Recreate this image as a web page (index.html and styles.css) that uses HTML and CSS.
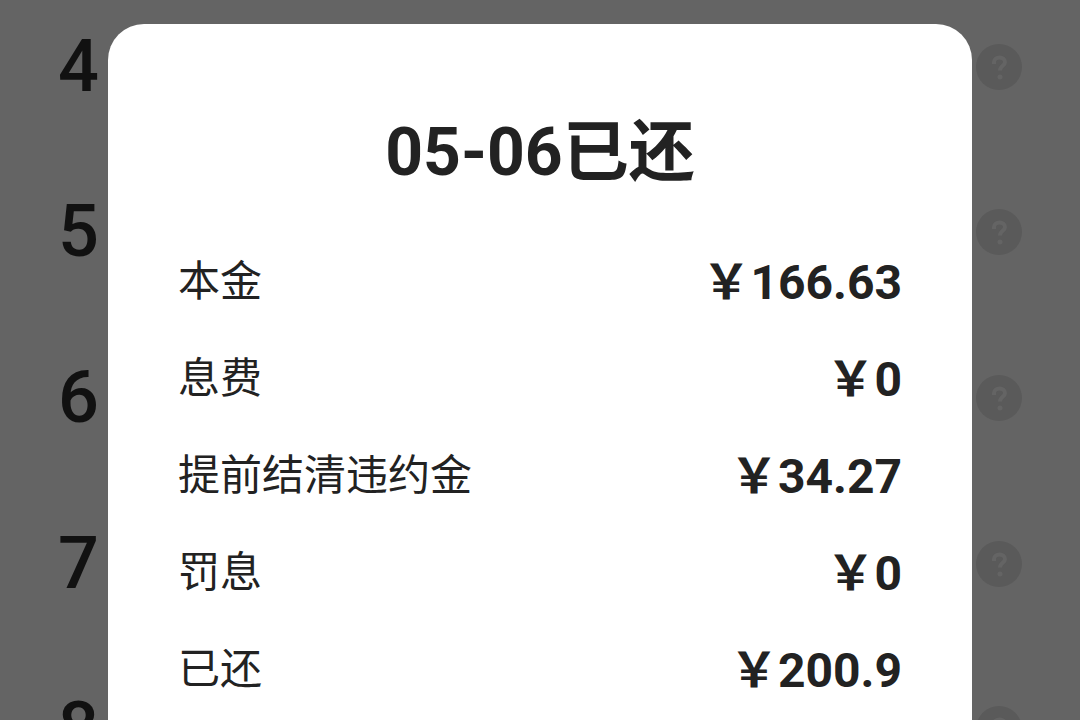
FILE: index.html
```html
<!DOCTYPE html>
<html lang="zh-CN">
<head>
  <meta charset="UTF-8">
  <meta name="viewport" content="width=device-width, initial-scale=1.0">
  <title>还款详情</title>
  <link rel="stylesheet" href="styles.css">
</head>
<body>
  <!-- question mark shared by the help buttons -->
  <svg width="0" height="0" class="defs">
    <symbol id="mark" viewBox="0 0 46 46">
      <path d="M18 20v-2a5.500 4.500 0 0 1 11 0c0 4-5 3.500-5 8.500" fill="none" stroke="currentColor" stroke-width="4"/>
      <circle cx="24" cy="33" r="2.500" fill="currentColor"/>
    </symbol>
  </svg>

  <main class="periods">
    <div class="period"><span>4</span><button class="help" aria-label="说明"><svg><use href="#mark"/></svg></button></div>
    <div class="period"><span>5</span><button class="help" aria-label="说明"><svg><use href="#mark"/></svg></button></div>
    <div class="period"><span>6</span><button class="help" aria-label="说明"><svg><use href="#mark"/></svg></button></div>
    <div class="period"><span>7</span><button class="help" aria-label="说明"><svg><use href="#mark"/></svg></button></div>
    <div class="period"><span>8</span><button class="help" aria-label="说明"><svg><use href="#mark"/></svg></button></div>
  </main>

  <div class="overlay">
    <section class="modal" role="dialog" aria-labelledby="title">
      <h1 id="title">05-06已还</h1>
      <dl>
        <div class="row"><dt>本金</dt><dd><span class="yen">&#xFFE5;</span>166.63</dd></div>
        <div class="row"><dt>息费</dt><dd><span class="yen">&#xFFE5;</span>0</dd></div>
        <div class="row"><dt>提前结清违约金</dt><dd><span class="yen">&#xFFE5;</span>34.27</dd></div>
        <div class="row"><dt>罚息</dt><dd><span class="yen">&#xFFE5;</span>0</dd></div>
        <div class="row"><dt>已还</dt><dd><span class="yen">&#xFFE5;</span>200.9</dd></div>
      </dl>
    </section>
  </div>
</body>
</html>
```
FILE: styles.css
```css
* {
  box-sizing: border-box;
}
body {
  margin: 0;
  height: 100vh;
  overflow: hidden;
  background: #646464;
  color: #111;
  font-family: Roboto, "Noto Sans CJK SC", sans-serif;
}
.defs {
  position: absolute;
}

/* list behind the dialog */
.periods {
  height: 100vh;
  overflow: hidden;
}
.period {
  display: flex;
  justify-content: space-between;
  align-items: center;
  height: 23vh;
  padding: 0 58px;
  font-size: 72px;
  font-weight: 500;
  line-height: 84px;
}
.period:first-child {
  margin-top: -16px;
}
.help {
  width: 46px;
  height: 46px;
  padding: 0;
  border: none;
  border-radius: 50%;
  background: #5a5a5a;
  color: #646464;
}
.help svg {
  display: block;
  width: 46px;
  height: 46px;
}

.overlay {
  position: absolute;
  inset: 0;
  padding: 24px 10% 0;
  overflow: hidden;
}
.modal {
  min-height: 100%;
  padding: 80px 70px 0;
  background: #fff;
  border-radius: 36px 36px 0 0;
  color: #222;
}
h1 {
  margin: 0 0 27px;
  font-size: 66px;
  font-weight: 700;
  line-height: 98px;
  text-align: center;
}
dl {
  margin: 0;
}
.row {
  display: flex;
  justify-content: space-between;
  align-items: center;
  height: 97px;
}
dt {
  font-size: 42px;
}
dd {
  margin: 0;
  font-size: 48px;
  font-weight: 700;
}
.yen {
  font-family: "Noto Sans CJK SC", sans-serif;
}
```
